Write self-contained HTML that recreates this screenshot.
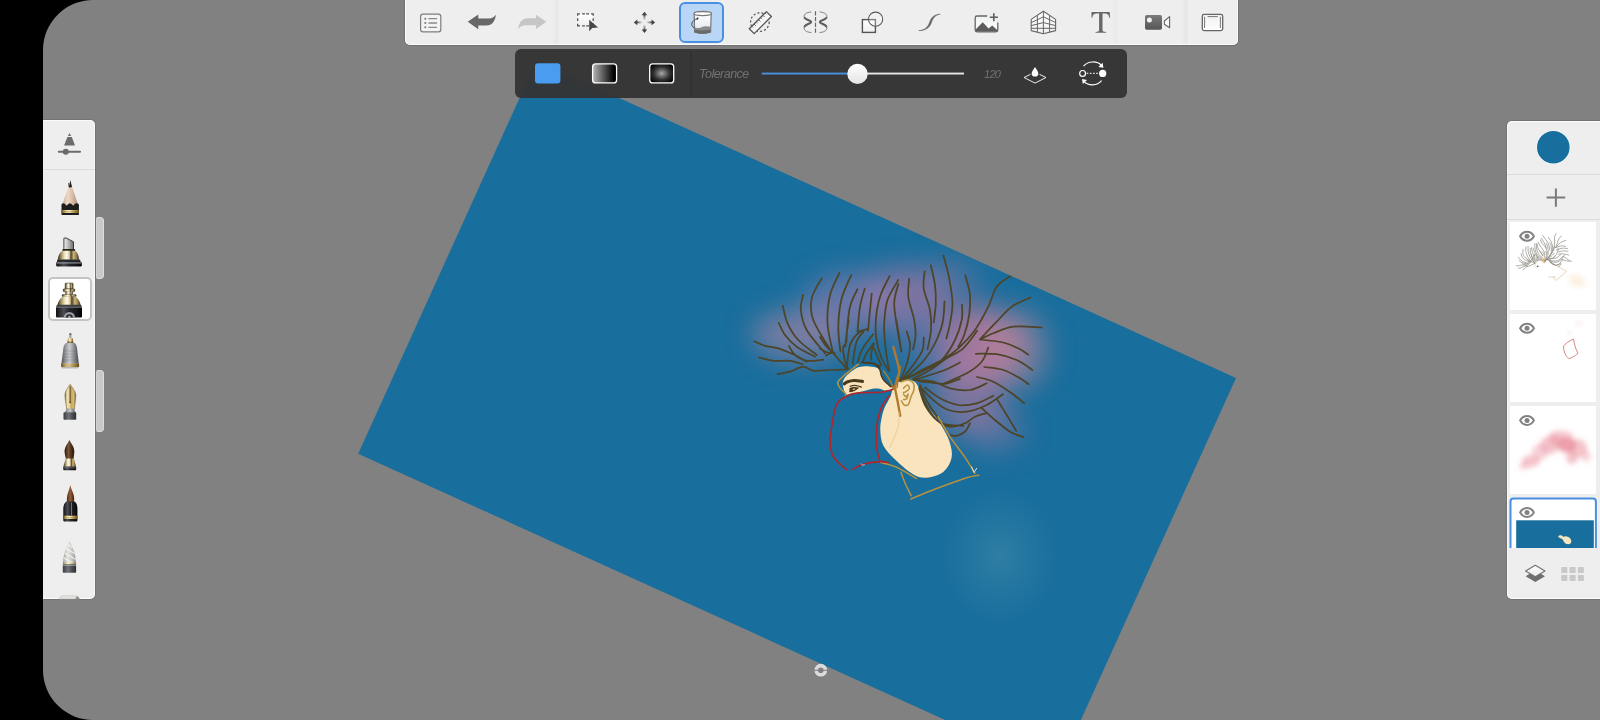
<!DOCTYPE html>
<html>
<head>
<meta charset="utf-8">
<title>Sketchbook</title>
<style>
html,body{margin:0;padding:0;}
body{width:1600px;height:720px;overflow:hidden;background:#000;position:relative;font-family:"Liberation Sans",sans-serif;}
#stage{position:absolute;left:43px;top:0;width:1557px;height:720px;background:#818181;border-radius:50px 0 0 50px;overflow:hidden;}
#art{position:absolute;left:0;top:0;width:1600px;height:720px;}
#topbar{position:absolute;left:404.7px;top:-2px;width:833.3px;height:47px;background:#eeeeee;border-radius:0 0 5px 5px;box-shadow:0 0 0 1px rgba(0,0,0,.12), inset 0 0 0 1px rgba(255,255,255,.75);}
#topbar .div{position:absolute;top:2px;height:44px;width:7px;background:linear-gradient(to right,rgba(0,0,0,0),rgba(0,0,0,.035) 85%,rgba(0,0,0,.07) 86%,rgba(255,255,255,.5) 100%);}
#topbar svg{position:absolute;left:.3px;top:2px;}
#selbtn{position:absolute;left:274.4px;top:4px;width:41px;height:37px;border:2px solid #4a90e2;border-radius:6px;background:#b9d6f7;}
#optbar{position:absolute;left:515px;top:48.5px;width:612px;height:49px;background:rgba(53,53,53,.97);border-radius:6px;}
#optbar svg{position:absolute;left:0;top:0;}
#optbar .lbl{will-change:transform;position:absolute;color:#727272;font-style:italic;font-size:12px;line-height:14px;}
#leftp{position:absolute;left:-2px;top:120px;width:54.2px;height:478.8px;background:#eeeeee;border-radius:0 5px 5px 0;overflow:hidden;box-shadow:0 0 0 1px rgba(0,0,0,.1), inset 0 0 0 1px rgba(255,255,255,.7);}
#leftp .hr{position:absolute;left:2px;top:49px;width:52px;height:1px;background:#dcdcdc;}
#lsel{position:absolute;left:47.5px;top:277.3px;width:40.4px;height:40.2px;border:2px solid #c4c4c4;border-radius:5px;background:#fff;}
.sh{position:absolute;left:95.8px;width:8.1px;background:#c9c9c9;border:1px solid #dcdcdc;border-left-color:#d0d0d0;box-sizing:border-box;border-radius:2px 4px 4px 2px;}
#rightp{position:absolute;left:1506.8px;top:120.8px;width:96px;height:478px;background:#eeeeee;border-radius:5px 0 0 5px;overflow:hidden;box-shadow:0 0 0 1px rgba(0,0,0,.1), inset 0 0 0 1px rgba(255,255,255,.7);}
#rightp .hr{position:absolute;left:0;width:93px;height:1px;background:#dcdcdc;}
.layer{position:absolute;left:3px;width:86.5px;height:88px;background:#fff;overflow:hidden;}
#brushes,#ricons{position:absolute;left:0;top:0;width:1600px;height:720px;pointer-events:none;}
</style>
</head>
<body>
<div id="stage"></div>

<!-- ARTWORK -->
<svg id="art" viewBox="0 0 1600 720">
<defs>
<clipPath id="cv"><polygon points="536.5,60.6 1236,377.9 1057.7,771 358.2,453.75"/></clipPath>
<radialGradient id="glow1"><stop offset="0" stop-color="#3a86a6" stop-opacity=".68"/><stop offset=".5" stop-color="#3a86a6" stop-opacity=".32"/><stop offset="1" stop-color="#3a86a6" stop-opacity="0"/></radialGradient>
<!--HAIRDEF--><filter id="blur12" x="-50%" y="-50%" width="200%" height="200%"><feGaussianBlur stdDeviation="14"/></filter>
<g id="hairpaths" fill="none" stroke-linecap="round" stroke-linejoin="round">
<path d="M754.2 341.2 C756.0 342.0 761.0 344.6 765.0 345.8 C769.0 347.0 773.3 346.8 778.3 348.3 C783.3 349.8 790.3 352.9 795.0 355.0 C799.7 357.1 802.0 360.0 806.7 360.8 C811.4 361.6 820.5 359.9 823.3 359.7 M778.7 322.8 C779.8 324.8 782.0 331.0 785.0 335.0 C788.0 339.0 791.7 343.1 796.7 346.7 C801.7 350.3 812.0 355.0 815.0 356.7 M782.8 305.8 C783.6 308.7 784.9 317.6 787.5 323.3 C790.1 329.0 793.4 334.7 798.3 340.0 C803.2 345.3 813.6 352.5 816.7 355.0 M803.0 295.0 C802.6 297.5 800.2 304.2 800.8 310.0 C801.4 315.8 802.7 322.8 806.7 330.0 C810.7 337.2 822.0 349.4 825.0 353.3 M821.7 278.3 C820.0 281.6 813.1 291.4 811.7 298.3 C810.3 305.2 810.1 311.2 813.3 320.0 C816.5 328.8 827.9 345.7 830.8 350.8 M839.5 272.8 C837.9 276.5 832.0 286.6 830.0 295.0 C828.0 303.4 827.1 314.0 827.5 323.3 C827.9 332.6 831.7 346.2 832.5 350.8 M851.3 275.0 C849.7 278.9 843.9 289.7 841.7 298.3 C839.5 306.9 838.5 317.8 838.3 326.7 C838.1 335.6 840.1 347.5 840.5 351.7 M857.5 289.2 C856.2 292.1 851.8 299.3 850.0 306.7 C848.2 314.1 847.5 326.6 846.7 333.3 C845.9 340.0 845.5 344.5 845.3 346.7 M864.7 288.7 C863.9 291.7 861.2 299.5 860.0 306.7 C858.8 313.9 857.9 327.5 857.5 331.7 M857.5 331.7 L867.5 329.2 M871.7 293.7 C871.4 296.4 870.6 303.8 870.0 310.0 C869.4 316.2 868.3 327.3 868.0 330.8 M867.5 328.8 C865.8 329.6 860.4 331.1 857.5 333.8 C854.6 336.5 851.8 339.4 850.0 345.0 C848.2 350.6 847.4 363.8 846.9 367.5 M863.8 331.3 C862.5 333.2 858.1 337.1 856.3 342.5 C854.5 347.9 853.4 360.2 852.8 363.8 M873.3 334.2 C871.5 336.6 865.1 344.1 862.5 348.8 C859.9 353.5 858.3 360.2 857.5 362.5 M873.8 343.1 C872.5 344.9 868.2 350.6 866.3 353.8 C864.4 357.0 863.1 361.1 862.5 362.5 M873.8 345.0 C873.4 346.2 871.7 350.0 871.3 352.5 C870.9 355.0 871.3 358.8 871.3 360.0 M874.4 348.8 C875.1 350.7 877.6 357.3 878.8 360.0 C879.9 362.7 880.9 364.2 881.3 365.0 M889.7 275.8 C888.1 279.3 882.3 289.3 880.0 296.7 C877.7 304.1 876.4 313.0 875.8 320.0 C875.2 327.0 875.4 332.6 876.3 338.8 C877.2 345.1 879.2 352.1 881.3 357.5 C883.4 362.9 887.5 369.0 888.8 371.3 M898.3 280.0 C896.5 283.3 889.9 292.8 887.5 300.0 C885.1 307.2 884.6 316.2 884.2 323.3 C883.8 330.4 884.5 336.2 885.0 342.5 C885.5 348.8 886.8 356.5 887.5 361.3 C888.2 366.1 889.1 369.6 889.4 371.3 M898.3 284.2 C897.6 287.4 894.3 295.7 894.2 303.3 C894.1 310.9 896.3 321.9 897.5 330.0 C898.7 338.1 900.7 348.1 901.3 351.7 M759.2 357.5 C761.6 358.1 768.2 360.2 773.3 360.8 C778.4 361.4 785.1 360.2 790.0 360.8 C794.9 361.4 800.4 363.6 802.5 364.2 M777.5 374.2 C779.6 373.8 785.7 372.9 790.0 371.7 C794.3 370.4 799.4 366.8 803.3 366.7 C807.2 366.6 808.8 370.2 813.3 370.8 C817.8 371.4 824.4 370.2 830.0 370.0 C835.6 369.8 844.1 369.5 846.9 369.4 M789.0 346.0 C790.0 347.5 792.0 352.4 795.0 355.0 C798.0 357.6 804.8 360.6 806.7 361.7 M820.0 336.9 C821.0 338.5 824.0 343.5 826.3 346.3 C828.6 349.1 831.3 351.1 833.8 353.8 C836.3 356.5 839.1 360.0 841.3 362.5 C843.5 365.0 846.0 367.8 846.9 368.8 M820.0 348.8 C821.2 349.4 825.0 351.8 827.5 352.5 C830.0 353.2 833.8 353.0 835.0 353.1 M826.0 355.5 L833.0 351.5 M848.8 320.0 C848.5 322.1 847.3 328.8 846.9 332.5 C846.5 336.2 846.9 340.0 846.3 342.5 C845.7 345.0 843.3 344.4 843.1 347.5 C842.9 350.6 844.2 357.8 845.0 361.3 C845.8 364.9 847.6 367.6 848.1 368.8 M863.8 362.5 C865.2 362.6 869.8 362.5 872.5 363.1 C875.2 363.7 878.8 365.8 880.0 366.3 M909.2 278.7 C909.1 281.7 907.5 289.8 908.3 296.7 C909.1 303.6 913.0 313.6 914.2 320.0 C915.4 326.4 915.8 330.1 915.6 335.0 C915.4 339.9 913.5 347.0 913.1 349.4 M924.7 271.3 C924.5 274.1 922.8 281.9 923.7 288.3 C924.6 294.8 928.8 303.1 930.0 310.0 C931.2 316.9 931.4 323.5 931.0 330.0 C930.6 336.5 928.1 346.0 927.5 349.2 M930.8 265.3 C931.5 268.6 934.2 278.7 935.0 285.0 C935.8 291.3 936.0 297.1 935.8 303.3 C935.6 309.6 934.1 319.3 933.7 322.5 M943.3 255.3 C944.3 259.1 947.7 270.3 949.2 278.3 C950.7 286.3 952.4 295.8 952.5 303.3 C952.6 310.8 951.0 317.4 950.0 323.3 C949.0 329.2 946.9 336.1 946.3 338.7 M944.5 301.7 C944.2 305.3 944.1 316.4 942.5 323.3 C940.9 330.2 938.0 337.2 935.0 343.3 C932.0 349.4 928.4 354.9 924.2 360.0 C920.0 365.1 913.8 370.4 910.0 374.0 C906.2 377.6 902.8 380.1 901.3 381.3 M965.3 275.3 C966.1 278.6 969.4 288.4 970.0 295.0 C970.6 301.6 970.2 308.3 969.2 315.0 C968.2 321.7 966.0 329.7 964.2 335.0 C962.4 340.3 959.3 344.8 958.3 346.7 M962.0 304.7 C962.0 307.2 962.9 314.1 961.7 320.0 C960.5 325.9 958.3 333.3 955.0 340.0 C951.7 346.7 947.5 354.6 941.7 360.0 C935.9 365.4 925.7 369.5 920.0 372.5 C914.3 375.5 909.6 377.1 907.5 378.0 M1010.8 275.8 C1008.4 277.6 1000.5 281.6 996.7 286.7 C993.0 291.8 991.9 299.5 988.3 306.7 C984.7 313.9 980.0 323.1 975.0 330.0 C970.0 336.9 963.6 343.4 958.3 348.3 C953.0 353.2 949.7 355.4 943.3 359.2 C936.9 363.0 926.4 367.5 920.0 371.0 C913.6 374.5 907.5 378.5 905.0 380.0 M1030.5 297.5 C1027.4 299.0 1017.3 302.7 1011.7 306.7 C1006.1 310.7 1002.0 316.3 996.7 321.7 C991.4 327.1 982.8 336.3 980.0 339.2 M1042.0 327.5 C1037.2 327.4 1021.4 325.7 1013.3 326.7 C1005.2 327.7 998.8 331.2 993.3 333.3 C987.8 335.4 982.2 338.5 980.0 339.5 M980.0 339.5 C983.9 340.0 996.9 341.0 1003.3 342.5 C1009.7 344.0 1014.1 346.3 1018.3 348.3 C1022.5 350.3 1026.6 353.6 1028.3 354.7 M977.2 330.8 C974.9 333.7 968.4 343.7 963.3 348.3 C958.2 352.9 952.2 354.7 946.7 358.3 C941.2 361.9 935.6 366.6 930.0 370.0 C924.4 373.4 915.9 377.3 913.1 378.8 M975.8 353.8 C979.3 353.9 989.9 353.2 996.7 354.2 C1003.5 355.2 1010.7 357.4 1016.7 360.0 C1022.7 362.6 1029.9 368.3 1032.5 370.0 M988.3 347.5 C987.2 349.9 985.3 357.4 981.7 361.7 C978.1 366.0 973.1 369.6 966.7 373.3 C960.3 377.0 947.2 382.0 943.3 383.7 M906.7 331.3 C907.2 333.6 909.9 340.0 910.0 345.0 C910.1 350.0 908.8 356.3 907.5 361.3 C906.2 366.3 903.8 371.7 902.5 375.0 C901.2 378.3 900.4 380.2 900.0 381.3 M923.8 337.5 C923.6 339.6 924.0 345.8 922.5 350.0 C921.0 354.2 917.7 358.5 915.0 362.5 C912.3 366.5 908.6 370.7 906.3 373.8 C904.0 376.9 902.1 380.1 901.3 381.3 M896.3 320.0 C896.7 322.5 898.0 329.8 898.8 335.0 C899.6 340.2 900.9 348.6 901.3 351.3 M984.2 367.0 C987.4 367.5 997.3 368.1 1003.3 370.0 C1009.3 371.9 1015.8 375.9 1020.0 378.3 C1024.2 380.7 1027.2 383.2 1028.7 384.2 M977.0 377.0 C979.7 377.8 987.5 379.0 993.3 381.7 C999.1 384.4 1006.6 389.7 1011.7 393.3 C1016.9 396.9 1022.1 401.6 1024.2 403.3 M986.7 383.3 C983.9 384.4 976.1 389.2 970.0 390.0 C963.9 390.8 956.1 389.7 950.0 388.3 C943.9 386.9 939.4 383.1 933.3 381.7 C927.2 380.3 916.6 380.3 913.3 380.0 M993.3 395.8 C990.5 397.1 982.5 401.8 976.7 403.3 C970.9 404.8 964.4 405.8 958.3 405.0 C952.2 404.2 945.5 401.2 940.0 398.3 C934.5 395.4 927.5 389.3 925.0 387.5 M1003.0 394.2 C1000.3 396.0 992.8 402.1 986.7 405.0 C980.7 407.9 973.1 410.9 966.7 411.7 C960.3 412.5 953.9 411.9 948.3 410.0 C942.7 408.1 938.0 403.9 933.3 400.0 C928.6 396.1 922.2 388.9 920.0 386.7 M997.5 400.0 C999.0 402.5 1003.6 409.9 1006.7 415.0 C1009.8 420.1 1014.6 428.2 1016.2 430.8 M981.7 408.0 C983.9 410.0 990.3 416.1 995.0 420.0 C999.7 423.9 1005.2 428.8 1010.0 431.7 C1014.8 434.6 1021.4 436.3 1023.7 437.2 M985.8 413.3 C984.0 413.9 978.5 415.0 975.0 416.7 C971.5 418.4 969.2 421.6 965.0 423.3 C960.8 425.0 954.7 427.2 950.0 426.7 C945.3 426.1 940.9 423.6 936.7 420.0 C932.5 416.4 927.9 410.3 925.0 405.0 C922.1 399.7 920.2 391.1 919.2 388.3 M970.0 423.3 C969.2 424.7 967.2 429.6 965.0 431.7 C962.8 433.8 959.2 435.2 956.7 435.8 C954.2 436.4 951.1 435.1 950.0 435.0 M921.7 395.0 C923.1 397.8 926.7 407.0 930.0 411.7 C933.3 416.4 936.2 420.9 941.7 423.3 C947.2 425.7 959.7 425.4 963.3 425.8 M960.0 362.5 C957.5 363.8 950.0 367.9 945.0 370.0 C940.0 372.1 935.2 373.3 930.0 375.0 C924.8 376.7 916.5 379.2 913.8 380.0 M960.0 378.8 C957.5 379.6 950.0 383.2 945.0 383.8 C940.0 384.4 934.4 382.9 930.0 382.5 C925.6 382.1 920.7 381.5 918.8 381.3 M920.0 385.0 C920.6 386.7 922.1 391.4 923.8 395.0 C925.5 398.6 927.6 402.5 930.0 406.3 C932.4 410.1 936.7 416.1 938.0 418.0"/>
</g><!--/HAIRDEF--></defs>
<polygon points="536.5,60.6 1236,377.9 1057.7,771 358.2,453.75" fill="#186e9d"/>
<g clip-path="url(#cv)" id="artg">
<ellipse cx="1000" cy="556" rx="58" ry="68" fill="url(#glow1)"/>
<!--ART--><g filter="url(#blur12)">
<ellipse cx="978" cy="345" rx="44" ry="40" fill="#cc7a9a" opacity=".78"/>
<ellipse cx="905" cy="298" rx="46" ry="32" fill="#b478a4" opacity=".62"/>
<ellipse cx="968" cy="398" rx="38" ry="36" fill="#bc7aa0" opacity=".55"/>
<ellipse cx="800" cy="335" rx="48" ry="25" fill="#b486a6" opacity=".62"/>
<ellipse cx="850" cy="303" rx="46" ry="30" fill="#a07eae" opacity=".55"/>
<ellipse cx="1020" cy="350" rx="28" ry="40" fill="#cc8a9c" opacity=".5"/>
<ellipse cx="935" cy="345" rx="40" ry="30" fill="#8078b0" opacity=".35"/>
<ellipse cx="995" cy="430" rx="30" ry="22" fill="#a87aa6" opacity=".4"/>
<ellipse cx="950" cy="280" rx="30" ry="20" fill="#b078a4" opacity=".35"/>
</g>
<path d="M892.7 389.2 C891.7 391.2 891.8 392.9 891.0 395.0 C890.2 397.1 888.8 399.5 887.7 401.7 C886.6 403.9 885.3 405.6 884.3 408.3 C883.3 411.0 882.3 414.3 881.6 418.0 C880.9 421.7 880.0 425.8 880.3 430.5 C880.6 435.2 880.8 440.9 883.6 446.1 C886.4 451.3 892.0 456.8 897.2 461.6 C902.4 466.5 909.5 472.6 914.7 475.2 C919.9 477.8 923.4 478.0 928.3 477.4 C933.1 476.8 939.9 474.7 943.8 471.4 C947.7 468.1 950.6 462.6 951.6 457.7 C952.6 452.8 951.3 447.4 949.7 442.2 C948.1 437.0 944.5 431.1 941.9 426.6 C939.3 422.1 936.8 418.4 934.1 415.0 C931.5 411.6 928.2 409.5 926.0 406.0 C923.8 402.5 922.5 397.6 921.0 394.0 C919.5 390.4 918.5 386.8 917.0 384.5 C915.5 382.2 914.3 381.2 912.0 380.5 C909.7 379.8 905.5 379.6 903.0 380.0 C900.5 380.4 898.7 381.5 897.0 383.0 C895.3 384.5 893.7 387.2 892.7 389.2Z" fill="#fae4bd"/>
<path d="M842.7 383.3 C842.7 381.5 843.1 380.6 843.9 379.2 C844.7 377.8 846.1 376.1 847.7 374.6 C849.3 373.1 851.6 371.2 853.5 370.0 C855.4 368.8 856.9 367.7 859.3 367.1 C861.7 366.5 864.9 366.2 867.7 366.3 C870.5 366.4 873.9 366.8 876.0 367.5 C878.1 368.2 879.2 369.4 880.2 370.8 C881.2 372.2 881.2 374.3 881.8 375.8 C882.3 377.3 882.5 378.6 883.5 380.0 C884.5 381.4 886.3 383.0 887.7 384.2 C889.1 385.4 891.0 386.3 891.8 387.1 C892.6 387.9 893.4 388.6 892.7 389.2 C892.0 389.8 889.1 390.2 887.7 390.4 C886.3 390.6 885.7 390.7 884.3 390.4 C882.9 390.1 881.2 389.1 879.3 388.8 C877.4 388.5 874.9 388.5 872.7 388.8 C870.5 389.1 868.2 389.8 866.0 390.4 C863.8 390.9 861.8 391.5 859.3 392.1 C856.8 392.7 853.1 393.4 851.0 393.8 C848.9 394.2 848.0 395.2 846.8 394.6 C845.6 394.0 844.6 391.9 843.9 390.0 C843.2 388.1 842.7 385.1 842.7 383.3Z" fill="#fae4bd"/>
<use href="#hairpaths" stroke="#4e4428" stroke-width="1.75"/>
<path d="M861.8 362.5 C863.6 362.6 869.8 362.3 872.7 363.3 C875.6 364.3 877.8 366.2 879.3 368.3 C880.8 370.4 880.6 373.7 881.4 375.8 C882.2 377.9 882.7 379.0 884.3 380.8 C885.9 382.6 889.9 385.7 891.0 386.7" fill="none" stroke="#4a3a1e" stroke-width="1.6" stroke-linecap="round"/>
<path d="M893.4 347.0 C893.8 348.5 895.1 353.3 895.8 356.0 C896.5 358.7 897.1 360.7 897.7 363.3 C898.3 365.9 899.4 368.9 899.3 371.7 C899.1 374.5 897.5 377.2 896.8 380.0 C896.1 382.8 895.1 384.7 895.2 388.3 C895.4 391.9 896.9 397.1 897.7 401.7 C898.5 406.3 899.8 413.4 900.2 415.8" fill="none" stroke="#b07a2a" stroke-width="2.4" stroke-linecap="round"/>
<path d="M883.5 370.8 C884.5 372.2 887.6 376.3 889.3 379.2 C891.0 382.1 892.8 386.8 893.5 388.3 M900.4 366.3 C900.1 368.0 899.1 372.8 898.6 376.3 C898.1 379.8 897.4 385.6 897.2 387.5" fill="none" stroke="#b07a2a" stroke-width="1.4" stroke-linecap="round"/>
<path d="M899.0 412.0 C898.9 414.2 899.3 420.7 898.5 425.0 C897.7 429.3 895.4 434.3 894.0 438.0 C892.6 441.7 890.7 445.5 890.0 447.0" fill="none" stroke="#e8c890" stroke-width="1" stroke-linecap="round" opacity=".9"/>
<path d="M858.5 364.2 C857.2 365.2 853.6 367.9 851.0 370.0 C848.4 372.1 844.9 374.6 842.7 376.7 C840.5 378.8 838.1 380.6 837.7 382.5 C837.3 384.4 838.9 386.4 840.2 388.3 C841.5 390.2 844.8 392.3 845.6 393.8 C846.4 395.3 844.9 396.9 844.8 397.5 M901.4 381.7 C902.6 381.4 906.5 379.7 908.5 380.0 C910.5 380.3 912.6 381.6 913.5 383.3 C914.4 385.0 914.3 387.8 913.9 390.0 C913.5 392.2 911.9 394.3 911.0 396.7 C910.1 399.1 909.6 402.8 908.5 404.2 C907.4 405.6 905.5 405.6 904.3 405.0 C903.1 404.4 901.9 401.5 901.4 400.8 M903.5 388.3 C904.1 387.8 906.3 385.0 907.3 385.0 C908.3 385.0 909.5 387.2 909.3 388.3 C909.1 389.4 907.0 391.0 906.0 391.7 C905.0 392.4 903.9 392.4 903.5 392.5 M903.5 394.2 C903.9 394.6 905.2 396.7 906.0 396.7 C906.8 396.7 908.0 393.8 908.1 394.2 C908.2 394.6 907.2 398.1 906.5 399.0 C905.8 399.9 904.2 399.4 903.8 399.5 M880.7 462.6 C883.5 463.4 891.2 464.8 897.2 467.5 C903.2 470.2 913.4 476.8 916.6 478.7 M901.0 472.3 C901.8 474.4 904.2 481.1 905.9 485.0 C907.6 488.9 910.3 493.8 911.2 495.6 M910.8 499.0 C915.0 497.3 926.9 492.3 936.0 488.8 C945.1 485.3 958.1 480.5 965.2 478.2 C972.3 475.9 976.5 475.7 978.8 475.2 M938.0 416.9 C940.0 420.1 945.2 429.6 949.7 436.4 C954.2 443.2 961.0 451.5 965.2 457.7 C969.4 463.9 973.3 470.7 974.9 473.3" fill="none" stroke="#b8923c" stroke-width="1.5" stroke-linecap="round" stroke-linejoin="round"/>
<path d="M971.5 466.5 L974 472.5 L976.8 468" fill="none" stroke="#e8e0d0" stroke-width="1"/>
<path d="M844.2 383.8 C844.8 383.4 846.0 382.2 847.7 381.7 C849.4 381.1 851.8 380.6 854.3 380.5 C856.8 380.4 861.0 381.2 862.4 381.4" fill="none" stroke="#4a3a1c" stroke-width="3.2" stroke-linecap="round"/>
<path d="M850.2 386.3 C850.9 386.1 852.8 385.4 854.3 385.4 C855.8 385.4 858.1 386.0 859.3 386.3 C860.5 386.6 861.0 387.0 861.4 387.1 M849.8 391.7 C850.5 391.5 852.9 391.0 854.3 390.4 C855.7 389.8 857.5 388.3 858.1 387.9" fill="none" stroke="#4a3a1c" stroke-width="1.2" stroke-linecap="round"/>
<path d="M849.3 388.6 C851 387 856 386.6 858.3 387.9 C857 389.6 853 391.4 849.6 391.9 Z" fill="#4a3a1c"/><ellipse cx="853.9" cy="389.2" rx="1.3" ry=".8" fill="#cdb99a" transform="rotate(-20 853.9 389.2)"/>
<path d="M843.5 397.9 C844.8 397.3 848.4 395.0 851.0 394.2 C853.6 393.4 856.5 393.2 859.3 392.9 C862.1 392.6 864.9 392.6 867.7 392.5 C870.5 392.4 873.2 392.6 876.0 392.5 C878.8 392.4 882.1 392.1 884.3 391.7 C886.5 391.3 887.8 390.8 889.3 390.4 C890.8 390.0 892.5 389.4 893.1 389.2 M843.5 397.9 C842.7 398.5 839.9 400.0 838.5 401.7 C837.1 403.4 836.1 405.4 835.2 408.3 C834.3 411.2 833.9 413.2 833.0 418.9 C832.1 424.5 829.9 435.7 830.1 442.2 C830.3 448.7 831.2 453.1 834.0 457.7 C836.8 462.3 844.5 467.8 846.6 469.8 M889.8 395.4 C889.2 396.2 887.3 398.1 886.0 400.0 C884.7 401.9 883.0 404.2 881.8 406.7 C880.6 409.2 879.7 411.7 878.9 415.0 C878.1 418.3 877.1 421.1 876.8 426.6 C876.4 432.1 876.2 442.2 876.8 448.0 C877.3 453.8 879.5 459.3 880.1 461.6 M852.5 469.4 C854.4 468.5 859.5 465.3 864.1 464.0 C868.7 462.7 876.1 461.8 880.1 461.6 C884.1 461.4 887.0 462.4 888.4 462.6" fill="none" stroke="#b3242c" stroke-width="1.6" stroke-linecap="round" stroke-linejoin="round"/>
<path d="M861 463.5l1.6 1.8 2.2-.6" fill="none" stroke="#d8d0c8" stroke-width=".9"/><!--/ART--></g>
<g><circle cx="820.8" cy="670.2" r="4.6" fill="none" stroke="#dcdcdc" stroke-width="3.6"/><rect x="813.6" y="669.7" width="14.4" height="1.1" fill="#818181"/></g>
</svg>

<!-- TOP TOOLBAR -->
<div id="topbar">
<div class="div" style="left:147.5px"></div>
<div class="div" style="left:706px;opacity:.5"></div>
<div class="div" style="left:776px"></div>
<div id="selbtn"></div>
<svg width="833" height="45" viewBox="405 0 833 45">
<defs>
<linearGradient id="wg" x1="0" y1="0" x2="0" y2="1"><stop offset="0" stop-color="#ffffff"/><stop offset="1" stop-color="#f0f0f0"/></linearGradient>
<linearGradient id="wg2" x1="0" y1="0" x2="0" y2="1"><stop offset="0" stop-color="#f0f1f2"/><stop offset="1" stop-color="#fdfdfd"/></linearGradient>
<linearGradient id="bk" x1="0" y1="0" x2="0" y2="1"><stop offset="0" stop-color="#ffffff"/><stop offset="1" stop-color="#dfe3e8"/></linearGradient>
<linearGradient id="dk" x1="0" y1="0" x2="0" y2="1"><stop offset="0" stop-color="#7a7a7a"/><stop offset="1" stop-color="#555"/></linearGradient>
</defs>
<!-- list -->
<rect x="420.6" y="14.2" width="20.2" height="17.6" rx="2.4" fill="#f3f3f3" stroke="#7d7d7d" stroke-width="1.2"/>
<g stroke="#8a8a8a" stroke-width="1.3" stroke-linecap="round"><path d="M428.9 18.7H436.6M428.9 23H436.6M428.9 27.3H436.6"/></g>
<g fill="#777"><circle cx="425.3" cy="18.7" r="1"/><circle cx="425.3" cy="23" r="1"/><circle cx="425.3" cy="27.3" r="1"/></g>
<!-- undo -->
<path d="M467.7 21.8 L478.3 14.5 V18.6 H489 C492 18.6 494.2 17.2 495.9 14.8 C495.5 18.6 493.8 25.6 486 25.6 H478.3 V29.3 Z" fill="#676767"/>
<!-- redo -->
<path d="M546.4 21.8 L536 29.1 V25.2 H525.4 C522.4 25.2 520 26.6 518.1 29.1 C518.6 25.2 520.2 18.2 528 18.2 H536 V14.8 Z" fill="#c6c6c6"/>
<!-- select -->
<rect x="577.7" y="13.9" width="15.5" height="11.9" fill="url(#wg)"/><path d="M577.7 15.7V13.9H579.9M582.1 13.9H584.9M586.2 13.9H589M591.1 13.9H593.2V15.7M593.2 18.2V20.9M593.2 23.6V25.8M577.7 18.2V20.9M577.7 23.8V25.8H579.9M582.1 25.8H584.9M586.2 25.8H589" fill="none" stroke="#505050" stroke-width="1.25"/>
<path d="M589.2 19.7 L589.2 31.2 L592.3 28 L598.1 27.6 Z" fill="#484848"/>
<!-- move -->
<defs><linearGradient id="mvU" x1="0" y1="0" x2="0" y2="1"><stop offset="0" stop-color="#444"/><stop offset="1" stop-color="#444" stop-opacity=".05"/></linearGradient>
<linearGradient id="mvD" x1="0" y1="1" x2="0" y2="0"><stop offset="0" stop-color="#444"/><stop offset="1" stop-color="#444" stop-opacity=".05"/></linearGradient>
<linearGradient id="mvL" x1="0" y1="0" x2="1" y2="0"><stop offset="0" stop-color="#444"/><stop offset="1" stop-color="#444" stop-opacity=".05"/></linearGradient>
<linearGradient id="mvR" x1="1" y1="0" x2="0" y2="0"><stop offset="0" stop-color="#444"/><stop offset="1" stop-color="#444" stop-opacity=".05"/></linearGradient></defs>
<rect x="643.5" y="14.6" width="1.9" height="5.6" fill="url(#mvU)"/>
<rect x="643.5" y="24.6" width="1.9" height="5.6" fill="url(#mvD)"/>
<rect x="636.6" y="21.45" width="5.6" height="1.9" fill="url(#mvL)"/>
<rect x="646.6" y="21.45" width="5.6" height="1.9" fill="url(#mvR)"/>
<g fill="#444"><path d="M644.45 11.7l2.8 3.5h-5.6zM644.45 33.1l2.8-3.5h-5.6zM633.8 22.4l3.5-2.8v5.6zM655.1 22.4l-3.5-2.8v5.6z"/></g>
<!-- bucket -->
<path d="M694.2 14 L694.6 32 Q702.6 34.6 710.6 32 L711.2 14" fill="url(#bk)" stroke="#777" stroke-width="1.2"/>
<path d="M694.6 27.6 Q698 28.6 701 27.6 Q705 25.2 710.8 27 L710.6 32.2 Q702.6 34.8 694.6 32.2 Z" fill="#8a8a8a"/>
<path d="M694.6 29.8 Q702.6 31 710.7 29.8 L710.6 32.4 Q702.6 35 694.6 32.4 Z" fill="#6a6a6a"/>
<ellipse cx="702.7" cy="13.6" rx="8.8" ry="2.1" fill="#fff" stroke="#7a7a7a" stroke-width="1.3"/>
<path d="M697.3 18.6 C692 20.5 689.5 25 694.3 28" fill="none" stroke="#444" stroke-width="1"/>
<ellipse cx="697.6" cy="18.6" rx=".8" ry="1.3" fill="#333" transform="rotate(20 697.6 18.6)"/>
<!-- ruler -->
<circle cx="759.9" cy="22.1" r="9.3" fill="none" stroke="#555" stroke-width="1.2" stroke-dasharray="2 2.1"/>
<path d="M749.3 28.7 L766.4 11.6 L771.4 16.5 L754.2 33.6 Z" fill="#f6f6f6" stroke="#555" stroke-width="1.3" stroke-linejoin="round"/>
<g stroke="#555" stroke-width=".9"><path d="M751.8 26.2l1.3 1.3M754 24l1.8 1.8M756.2 21.8l1.3 1.3M758.4 19.6l1.8 1.8M760.6 17.4l1.3 1.3M762.8 15.2l1.8 1.8M765 13l1.3 1.3"/></g>
<!-- symmetry -->
<path d="M815.5 11.2V33.8" stroke="#666" stroke-width="1.2" stroke-dasharray="4.2 1.6" fill="none"/>
<g fill="none" stroke="#5e5e5e" stroke-linecap="round">
<path d="M811 12 C805.5 12.3 803.4 15 804.3 17.2 C805.4 19.8 811.4 20.2 811.4 21.9 C811.4 23.6 805.4 24.2 804.3 27 C803.4 29.4 805.5 32.2 811 32.5" stroke-width="1" opacity=".75"/>
<path d="M804.6 17.8 C806 20 811.2 20.4 811.2 21.9 C811.2 23.4 806 23.9 804.6 26.4" stroke-width="2.1"/>
<path d="M820 12 C825.5 12.3 827.6 15 826.7 17.2 C825.6 19.8 819.6 20.2 819.6 21.9 C819.6 23.6 825.6 24.2 826.7 27 C827.6 29.4 825.5 32.2 820 32.5" stroke-width="1" opacity=".75"/>
<path d="M826.4 17.8 C825 20 819.8 20.4 819.8 21.9 C819.8 23.4 825 23.9 826.4 26.4" stroke-width="2.1"/>
</g>
<!-- shapes -->
<rect x="862.4" y="19.6" width="13" height="12.8" fill="url(#wg)" stroke="#555" stroke-width="1.4"/>
<circle cx="875.6" cy="19.2" r="7.1" fill="rgba(255,255,255,.25)" stroke="#5a5a5a" stroke-width="1.1"/>
<!-- curve -->
<path d="M918.6 30.6 C926 30.3 928.4 25.6 929.6 22.3 C931 18 933.5 14.6 940.2 14.1 C934.6 15.4 932.8 18.8 931.4 22.8 C929.6 27.6 925.6 30.9 918.6 30.6 Z" fill="#666" stroke="#666" stroke-width=".5"/>
<!-- image+ -->
<path d="M987.2 16H977 Q975.2 16 975.2 17.8V30 Q975.2 31.8 977 31.8H996 Q997.8 31.8 997.8 30V22.5" fill="url(#wg2)" stroke="#666" stroke-width="1.3"/>
<path d="M975.6 29.6 L982.7 22.2 L988.6 28.4 L992.2 25.6 L997.5 30.2 L997.2 31 Q996.6 31.6 996 31.6 H977 Q975.8 31.4 975.6 30.6Z" fill="#5c5c5c"/>
<path d="M993.8 13.2V21.3M989.8 17.2H997.9" stroke="#5c5c5c" stroke-width="1.6" fill="none"/>
<!-- perspective grid -->
<path d="M1031.2 19.4 L1043.4 11.2 L1055.6 19.4 V30.6 L1043.4 33.7 L1031.2 30.6 Z" fill="url(#wg)" stroke="#666" stroke-width="1.1" stroke-linejoin="round"/>
<g fill="none" stroke="#666" stroke-width="1"><path d="M1043.4 11.2V33.7M1037.4 15.3V32.2M1049.6 15.3V32.2M1031.2 22.6L1043.4 16.8L1055.6 22.6M1031.2 25.6L1043.4 22.6L1055.6 25.6M1031.2 28.3H1055.6"/></g>
<!-- T -->
<path d="M1091.5 12.1 H1109.7 L1110.1 17.7 H1109.3 C1108.8 14.8 1107.6 13.5 1105 13.5 H1102.5 V29.6 C1102.5 31.4 1103.3 32 1106.1 32.1 V32.8 H1095.5 V32.1 C1098.3 32 1099.1 31.4 1099.1 29.6 V13.5 H1096.6 C1094 13.5 1092.8 14.8 1092.3 17.7 H1091.5 Z" fill="#686868"/>
<!-- video -->
<rect x="1145" y="15" width="17" height="14.8" rx="1.8" fill="url(#dk)"/>
<circle cx="1149.4" cy="19.9" r="2.5" fill="#f2f2f2"/>
<path d="M1164.4 21 L1169.6 16.6 V27.8 L1164.4 24.2 Z" fill="#f8f8f8" stroke="#666" stroke-width="1.1" stroke-linejoin="round"/>
<!-- fullscreen -->
<rect x="1202.3" y="14.4" width="20.4" height="16.2" rx="1.8" fill="url(#wg2)" stroke="#666" stroke-width="1.3"/>
<path d="M1204.6 17.2V27.6M1220.4 17.2V27.6M1208 16.6H1217.4" stroke="#777" stroke-width="1" fill="none" stroke-linecap="round"/>
</svg>
</div>

<!-- OPTIONS BAR -->
<div id="optbar">
<svg width="612" height="49" viewBox="515 48.5 612 49">
<defs>
<linearGradient id="lg1" x1="0" y1="0" x2="1" y2="0"><stop offset="0" stop-color="#b6b6b6"/><stop offset=".5" stop-color="#505050"/><stop offset=".9" stop-color="#000"/></linearGradient>
<radialGradient id="rg1" cx=".5" cy=".5" r=".6"><stop offset="0" stop-color="#a8a8a8"/><stop offset=".55" stop-color="#333"/><stop offset="1" stop-color="#000"/></radialGradient>
<linearGradient id="kn" x1="0" y1="0" x2="0" y2="1"><stop offset="0" stop-color="#ffffff"/><stop offset="1" stop-color="#e4e4e4"/></linearGradient>
</defs>
<rect x="535" y="62.8" width="25.4" height="20.2" rx="3" fill="#4a9cf0"/>
<rect x="592.6" y="63.4" width="24" height="19" rx="3" fill="url(#lg1)" stroke="#fff" stroke-width="1.3"/>
<rect x="649.7" y="63.4" width="24" height="19" rx="3" fill="url(#rg1)" stroke="#fff" stroke-width="1.3"/>
<rect x="690.5" y="51" width="1" height="44" fill="#2c2c2c"/>
<!-- slider -->
<rect x="761.8" y="72.1" width="96" height="1.9" fill="#4a90e2"/>
<rect x="857" y="72.1" width="107" height="1.9" fill="#e6e6e6"/>
<circle cx="857.5" cy="73.4" r="10.2" fill="url(#kn)"/>
<!-- drop -->
<path d="M1035 71.6 L1046 77 L1035 82.6 L1024 77 Z" fill="none" stroke="#eee" stroke-width="1" stroke-linejoin="round"/>
<path d="M1035 65.2 C1036.8 68.2 1039.1 70.4 1039.1 72.7 A4.1 4.1 0 0 1 1030.9 72.7 C1030.9 70.4 1033.2 68.2 1035 65.2 Z" fill="#fff" stroke="#353535" stroke-width="1.4"/>
<!-- swap -->
<circle cx="1082.6" cy="72.9" r="2.9" fill="none" stroke="#fff" stroke-width="1.2"/>
<circle cx="1102.7" cy="72.9" r="3.6" fill="#fff"/>
<path d="M1086.6 72.9H1098.6" stroke="#ddd" stroke-width="1.3" stroke-dasharray="1.7 1.5" fill="none"/>
<path d="M1083.6 65.6 C1088 60.4 1097 60 1101.4 65" fill="none" stroke="#fff" stroke-width="1.2"/>
<path d="M1103.4 67.2 L1098.4 66.4 L1102.6 62.2 Z" fill="#fff"/>
<path d="M1101.6 80.2 C1097 85.6 1088.4 85.6 1084 80.8" fill="none" stroke="#fff" stroke-width="1.2"/>
<path d="M1082 78.6 L1087 79.4 L1082.8 83.6 Z" fill="#fff"/>
</svg>
<div class="lbl" style="left:184.4px;top:18.4px;font-size:12.5px;letter-spacing:-0.52px;">Tolerance</div>
<div class="lbl" style="left:468.5px;top:18px;font-size:11px;letter-spacing:-0.7px;">120</div>
</div>

<!-- LEFT PANEL -->
<div style="position:absolute;left:43px;top:0;width:60px;height:720px;overflow:hidden;"><div id="leftp"><div class="hr"></div></div></div>
<div class="sh" style="top:216.8px;height:62px"></div>
<div class="sh" style="top:369.8px;height:62px"></div>
<div id="lsel"></div>
<svg id="brushes" viewBox="0 0 1600 720">
<defs>
<linearGradient id="gold" x1="0" y1="0" x2="1" y2="0">
<stop offset="0" stop-color="#2a2418"/><stop offset=".12" stop-color="#8a7a50"/><stop offset=".3" stop-color="#e8dcb0"/><stop offset=".42" stop-color="#fffdf0"/><stop offset=".55" stop-color="#d8c490"/><stop offset=".62" stop-color="#4a4030"/><stop offset=".75" stop-color="#cdb67a"/><stop offset=".9" stop-color="#8a7448"/><stop offset="1" stop-color="#2a2418"/></linearGradient>
<linearGradient id="goldb" x1="0" y1="0" x2="1" y2="0">
<stop offset="0" stop-color="#6a5424"/><stop offset=".25" stop-color="#e8d088"/><stop offset=".45" stop-color="#fff4c8"/><stop offset=".7" stop-color="#c8a850"/><stop offset="1" stop-color="#6a5424"/></linearGradient>
<linearGradient id="nibg" x1="0" y1="0" x2="1" y2="0"><stop offset="0" stop-color="#8a7034"/><stop offset=".2" stop-color="#f0e2b4"/><stop offset=".45" stop-color="#e6d298"/><stop offset=".55" stop-color="#c4a65c"/><stop offset=".8" stop-color="#d6bc78"/><stop offset="1" stop-color="#7a6230"/></linearGradient>
<linearGradient id="blk" x1="0" y1="0" x2="1" y2="0">
<stop offset="0" stop-color="#111"/><stop offset=".3" stop-color="#4a4e54"/><stop offset=".5" stop-color="#24262a"/><stop offset=".8" stop-color="#15161a"/><stop offset="1" stop-color="#000"/></linearGradient>
<linearGradient id="steel" x1="0" y1="0" x2="1" y2="0">
<stop offset="0" stop-color="#55575b"/><stop offset=".3" stop-color="#a6a8ac"/><stop offset=".48" stop-color="#c8cace"/><stop offset=".75" stop-color="#85878b"/><stop offset="1" stop-color="#47494d"/></linearGradient>
<linearGradient id="dgrey" x1="0" y1="0" x2="1" y2="0">
<stop offset="0" stop-color="#3a3c3e"/><stop offset=".4" stop-color="#70747a"/><stop offset=".7" stop-color="#4a4c50"/><stop offset="1" stop-color="#2c2e30"/></linearGradient>
<linearGradient id="wood" x1="0" y1="0" x2="1" y2="0">
<stop offset="0" stop-color="#c6a690"/><stop offset=".35" stop-color="#ecd8c8"/><stop offset=".6" stop-color="#dcc0aa"/><stop offset="1" stop-color="#a88672"/></linearGradient>
<linearGradient id="brown" x1="0" y1="0" x2="1" y2="0">
<stop offset="0" stop-color="#2a180a"/><stop offset=".4" stop-color="#7a563a"/><stop offset=".6" stop-color="#5a3a20"/><stop offset="1" stop-color="#241206"/></linearGradient>
<linearGradient id="brown2" x1="0" y1="0" x2="1" y2="0">
<stop offset="0" stop-color="#4a2612"/><stop offset=".45" stop-color="#96603a"/><stop offset="1" stop-color="#3e1e0c"/></linearGradient>
<linearGradient id="chis" x1="0" y1="0" x2="1" y2="0">
<stop offset="0" stop-color="#f4f4f4"/><stop offset=".5" stop-color="#b0b2b4"/><stop offset="1" stop-color="#6a6c6e"/></linearGradient>
<linearGradient id="wht" x1="0" y1="0" x2="1" y2="0">
<stop offset="0" stop-color="#a4a4a0"/><stop offset=".35" stop-color="#e4e4e0"/><stop offset=".7" stop-color="#c6c6c2"/><stop offset="1" stop-color="#8e8e8a"/></linearGradient>
</defs>
<!-- brush editor -->
<path d="M69.55 133 L71.2 136 H67.9 Z" fill="#6e6e6e"/>
<path d="M67.4 137 H71.8 L75 145.4 H64.1 Z" fill="#6b6b6b"/>
<path d="M58.8 151.7H80" stroke="#6b6b6b" stroke-width="2" stroke-linecap="round"/>
<circle cx="65.8" cy="151.7" r="3.05" fill="#6b6b6b"/>
<!-- pencil -->
<path d="M70.2 181.4 L78.7 206.6 H61.7 Z" fill="url(#wood)"/>
<path d="M70.3 180.3 L72 187 Q70.4 187.8 68.9 187.2 Z" fill="#1c1c1c"/>
<path d="M68.6 183 L69 187" stroke="#3a3a3a" stroke-width=".8"/>
<path d="M61.5 204.6 Q63.4 201.6 66.6 205.8 Q70 200.6 73.2 205.8 Q76.4 201.6 78.9 204.6 V214.4 Q78.9 215.1 78.2 215.1 H62.2 Q61.5 215.1 61.5 214.4 Z" fill="#1d1d1d"/>
<rect x="61.5" y="210" width="17.4" height="2.9" fill="url(#goldb)"/>
<rect x="61.5" y="211.3" width="17.4" height=".5" fill="#7a6430" opacity=".7"/>
<!-- chisel marker -->
<path d="M63.9 238.2 L66 237.9 L73.5 241.8 V249.6 H63.9 Z" fill="url(#chis)" stroke="#2e2e2e" stroke-width=".9" stroke-linejoin="round"/>
<rect x="62.4" y="249" width="12.8" height="2.2" rx=".8" fill="#2a261c"/>
<path d="M62.8 250.8 H74.8 C77.6 252 78.8 256 78.9 259.8 H57.9 C58 256 59.8 252 62.8 250.8 Z" fill="url(#gold)"/>
<rect x="57" y="259.4" width="23.4" height="2.8" rx="1" fill="#26282a"/>
<rect x="56.2" y="261.8" width="25.6" height="4.6" rx="1.2" fill="url(#blk)"/>
<rect x="56.6" y="262.5" width="24.8" height=".9" fill="#b4b8bc"/>
<!-- marker selected -->
<rect x="65.2" y="283.1" width="7.9" height="6" rx=".8" fill="url(#gold)" stroke="#2a2418" stroke-width=".5"/>
<rect x="63.2" y="288.8" width="11.6" height="3" rx="1.2" fill="url(#gold)" stroke="#2a2418" stroke-width=".5"/>
<rect x="65.4" y="291.6" width="7.4" height="3.2" fill="url(#gold)"/>
<rect x="62" y="294.4" width="14.2" height="2.4" rx="1" fill="url(#gold)" stroke="#2a2418" stroke-width=".4"/>
<path d="M62.6 296.6 H75.6 C78 298.6 80.2 302 80.6 305.2 H57.4 C57.8 302 60.2 298.6 62.6 296.6 Z" fill="url(#gold)"/>
<rect x="56.6" y="304.8" width="24.8" height="2.4" rx=".8" fill="#3c3e40"/>
<rect x="56" y="306.4" width="26" height="11" rx="1" fill="url(#blk)"/>
<rect x="56" y="306.4" width="26" height="1.6" fill="#6a6e72" opacity=".8"/>
<path d="M63.8 317.4 A5.6 5.4 0 0 1 75 317.4 Z" fill="#9a9ea2"/>
<path d="M66 317.4 A3.4 3.2 0 0 1 72.8 317.4 Z" fill="#2a2c2e"/>
<path d="M68 317.4 A1.4 1.4 0 0 1 70.8 317.4 Z" fill="#c8ccd0"/>
<!-- ballpoint -->
<rect x="69.2" y="333.4" width="2.3" height="5" rx=".9" fill="#a4a6a8"/>
<rect x="69.5" y="333.4" width="1.7" height="1.3" fill="#3c3c3c"/>
<path d="M68 338.2 H72.8 L73.3 343.3 H67.4 Z" fill="url(#goldb)"/>
<path d="M67.4 341.6 H73.3 V343.3 H67.4 Z" fill="#3a3020" opacity=".55"/>
<path d="M65.8 343 H74.9 C76.4 344.4 76.8 346.4 77 348 L78.8 363.8 H61.4 L63.4 348 C63.6 346.4 64.2 344.4 65.8 343 Z" fill="url(#steel)"/>
<g stroke="#4e5054" stroke-width=".5" opacity=".45"><path d="M63.2 351H77.4M62.9 354H77.7M62.5 357H78.1M62.1 360H78.5"/></g>
<rect x="61.1" y="363.5" width="18" height="3.5" rx=".6" fill="url(#goldb)"/>
<rect x="61.1" y="363.5" width="18" height="3.5" rx=".6" fill="#5a4420" opacity=".28"/>
<rect x="61.6" y="367" width="17" height="1.4" rx=".6" fill="#b8b8b4"/>
<!-- nib pen -->
<path d="M70.1 384.2 C72.4 388 76 391.6 75.8 395.6 C75.6 400.6 74.6 405.6 74.4 409.4 H66.6 C66.4 405.6 65.2 400.6 64.9 395.6 C64.7 391.6 67.8 388 70.1 384.2 Z" fill="url(#nibg)" stroke="#6a5424" stroke-width=".5"/>
<path d="M70.1 386.2V402" stroke="#3a2e14" stroke-width=".9"/>
<circle cx="70.1" cy="402.4" r=".8" fill="#3a2e14"/>
<path d="M67 408.4 H73.6 C74 410.4 75.4 411.6 76 412.6 H64.4 C65 411.6 66.6 410.4 67 408.4 Z" fill="url(#steel)"/>
<rect x="63.5" y="412.2" width="12.7" height="7.6" rx=".8" fill="url(#dgrey)"/>
<!-- round brush -->
<path d="M69.4 440 C71.6 444 74.6 447.6 74.3 452 C74.1 455 73.7 457 73.5 459.2 H66 C65.6 457 64.8 455 64.6 452 C64.4 447.6 67.2 444 69.4 440 Z" fill="url(#brown)"/>
<path d="M65.6 458.6 H74 C74.4 462 75.6 464 75.9 466.8 H63.5 C63.8 464 65.2 462 65.6 458.6 Z" fill="url(#gold)"/>
<rect x="63.3" y="466.5" width="12.8" height="3.7" rx=".8" fill="url(#blk)"/><rect x="63.6" y="467.6" width="12.2" height=".6" fill="#a8acb0" opacity=".8"/>
<!-- pointed brush -->
<path d="M70.3 485 C71.2 490 74.4 494 74.2 499 C74.1 500.6 73.8 502 73.6 503.4 H67 C66.8 502 66.9 500.6 66.9 499 C66.9 494 69.4 490 70.3 485 Z" fill="url(#brown2)"/>
<path d="M66.4 501.4 H74.6 C76.6 502.6 77.3 505.4 77.4 508.3 V520.6 Q77.4 521.4 76.6 521.4 H64.1 Q63.3 521.4 63.3 520.6 V508.3 C63.4 505.4 64.4 502.6 66.4 501.4 Z" fill="url(#blk)"/>
<rect x="71" y="502.4" width=".9" height="13" fill="#c8ccd4" opacity=".55"/>
<rect x="63.3" y="515.7" width="14.1" height="3.2" fill="url(#goldb)"/>
<rect x="63.3" y="517" width="14.1" height=".5" fill="#6a5424" opacity=".6"/>
<!-- smudge -->
<clipPath id="smc"><path d="M69.5 540.9 C72 545.6 75.8 553.6 75.9 562.9 H63 C63.1 553.6 67 545.6 69.5 540.9 Z"/></clipPath>
<path d="M69.5 540.9 C72 545.6 75.8 553.6 75.9 562.9 H63 C63.1 553.6 67 545.6 69.5 540.9 Z" fill="url(#wht)"/>
<g clip-path="url(#smc)" stroke="#f6f6f2" stroke-width="1.3" opacity=".8" fill="none"><path d="M66 543.4L74.6 548.6M64.4 547.6L76.4 554.6M62.8 552L77.4 560.4M62 556.8L76 565"/></g>
<rect x="62.9" y="562.6" width="13.2" height="1.9" fill="url(#goldb)" opacity=".75"/>
<rect x="62.8" y="564.3" width="13.3" height="8.4" rx=".8" fill="url(#dgrey)"/>
<rect x="63" y="565" width="12.9" height=".8" fill="#b4b8bc" opacity=".8"/>
<!-- partial bottom -->
<path d="M59.2 599 Q59.8 596 62.8 595.8 H76 Q78.8 596 79.4 599 Z" fill="#e4e4de" stroke="#b8b8b2" stroke-width=".5"/><path d="M75.6 599 Q75.8 596.4 77.4 596.2 Q79 596.6 79.4 599 Z" fill="#8c9094"/>
</svg>

<!-- RIGHT PANEL -->
<div id="rightp">
<div class="hr" style="top:53.6px"></div>
<div class="hr" style="top:98.4px"></div>
<div class="layer" style="top:101px"></div>
<div class="layer" style="top:193px"></div>
<div class="layer" style="top:285px"></div>
</div>

<svg id="ricons" viewBox="0 0 1600 720">
<defs>
<filter id="b3" x="-50%" y="-50%" width="200%" height="200%"><feGaussianBlur stdDeviation="2.6"/></filter>
<filter id="b5" x="-50%" y="-50%" width="200%" height="200%"><feGaussianBlur stdDeviation="5"/></filter>
<clipPath id="l4clip"><rect x="1507" y="497" width="93" height="51"/></clipPath>
<linearGradient id="wg3" x1="0" y1="0" x2="0" y2="1"><stop offset="0" stop-color="#ffffff"/><stop offset="1" stop-color="#e8e8e8"/></linearGradient>
</defs>
<!-- color -->
<circle cx="1553.3" cy="147.3" r="16.9" fill="#f8fcff"/>
<circle cx="1553.3" cy="147.3" r="16.3" fill="#186e9d"/>
<!-- plus -->
<path d="M1546.6 197.6H1565.2M1555.9 188.6V206.8" stroke="#7a7a7a" stroke-width="2" fill="none"/>
<!-- layer1 thumb -->
<g transform="translate(1516.3 265.8) scale(.193) rotate(-24.5) translate(-754.2 -341.2)">
<use href="#hairpaths" stroke="#86847a" stroke-width="3.1"/>
<path d="M890.6 345 C895 356 897 370 895 385 M883.8 370 L893.8 387.5 M900 366 L896.3 387.5" stroke="#c89a50" stroke-width="4" fill="none"/>
<ellipse cx="853.6" cy="389.6" rx="5" ry="4" fill="#6a5a3c"/>
<path d="M858.8 365 L838 382 L845 397" stroke="#d8b884" stroke-width="2" fill="none"/>
<path d="M880.7 462.6 L916.6 478.7 M901 472 L911 495.6 L978.8 475.2 L938 417" stroke="#d0b080" stroke-width="2.4" fill="none"/>
</g>
<ellipse cx="1577" cy="281" rx="9" ry="6" fill="#fbeeda" opacity=".8" filter="url(#b3)" transform="rotate(25 1577 281)"/>
<!-- layer2 thumb -->
<path d="M1573.6 339 C1569 341 1565.4 343.6 1563.6 346 C1563.4 351 1565.2 356 1568.8 358.6 C1572 358 1575.4 355.6 1578 353.2 C1575.6 349 1574.2 344 1573.6 339 Z" fill="none" stroke="#d07878" stroke-width=".9" stroke-linejoin="round"/>
<circle cx="1579" cy="323.5" r="2.4" fill="#f6e4e8" filter="url(#b3)" opacity=".9"/>
<circle cx="1569.5" cy="333" r="2" fill="#f6e4e8" filter="url(#b3)" opacity=".9"/>
<!-- layer3 thumb -->
<g filter="url(#b3)" fill="#ea8c9a">
<ellipse cx="1566.8" cy="444.9" rx="9" ry="8" opacity=".8"/>
<ellipse cx="1561" cy="436" rx="12" ry="6" opacity=".4"/>
<ellipse cx="1550" cy="445" rx="10" ry="9" opacity=".5"/>
<ellipse cx="1540" cy="452" rx="8" ry="8" opacity=".4"/>
<ellipse cx="1531" cy="461" rx="9" ry="6" opacity=".5"/>
<ellipse cx="1524" cy="466" rx="5" ry="4" opacity=".35"/>
<ellipse cx="1578" cy="448" rx="9" ry="9" opacity=".5"/>
<ellipse cx="1572" cy="458" rx="6" ry="6" opacity=".5"/>
<ellipse cx="1586" cy="456" rx="5" ry="6" opacity=".35"/>
<ellipse cx="1556" cy="440" rx="8" ry="7" opacity=".35"/>
</g>
<!-- layer4 selected -->
<g clip-path="url(#l4clip)">
<rect x="1510.5" y="498.5" width="85.4" height="88" rx="3" fill="#fff" stroke="#4a8fdf" stroke-width="2"/>
<rect x="1516.2" y="520.3" width="77.6" height="43.8" fill="#186e9d"/>
<path d="M1558 536.4 C1559.5 534.6 1562 535 1563.4 536.8 C1565.6 535.6 1569 536.6 1570.6 539 C1572.2 541.6 1571 544 1568.4 544.2 C1565.6 544.2 1563.6 542 1562.8 539.4 C1561.6 538 1559 538.4 1558 536.4 Z" fill="#f6e6c0"/>
</g>
<path d="M1520.1 236.3 C1523.2 230.3 1530.8 230.3 1533.9 236.3 C1530.8 242.3 1523.2 242.3 1520.1 236.3 Z" fill="#fff" stroke="#828282" stroke-width="2" stroke-linejoin="miter"/><circle cx="1527.0" cy="236.3" r="2.5" fill="#828282"/>
<path d="M1520.1 328.3 C1523.2 322.3 1530.8 322.3 1533.9 328.3 C1530.8 334.3 1523.2 334.3 1520.1 328.3 Z" fill="#fff" stroke="#828282" stroke-width="2" stroke-linejoin="miter"/><circle cx="1527.0" cy="328.3" r="2.5" fill="#828282"/>
<path d="M1520.1 420.4 C1523.2 414.4 1530.8 414.4 1533.9 420.4 C1530.8 426.4 1523.2 426.4 1520.1 420.4 Z" fill="#fff" stroke="#828282" stroke-width="2" stroke-linejoin="miter"/><circle cx="1527.0" cy="420.4" r="2.5" fill="#828282"/>
<path d="M1520.1 512.4 C1523.2 506.4 1530.8 506.4 1533.9 512.4 C1530.8 518.4 1523.2 518.4 1520.1 512.4 Z" fill="#fff" stroke="#828282" stroke-width="2" stroke-linejoin="miter"/><circle cx="1527.0" cy="512.4" r="2.5" fill="#828282"/>
<!-- bottom icons -->
<path d="M1535.3 570.6 L1545 576.3 L1535.3 582 L1525.6 576.3 Z" fill="#6e6e6e"/>
<path d="M1535.3 565.3 L1545 571 L1535.3 576.7 L1525.6 571 Z" fill="url(#wg3)" stroke="#707070" stroke-width="1.1" stroke-linejoin="round"/>
<g fill="#c9c9c9"><rect x="1561.3" y="567" width="6" height="6" rx=".6"/><rect x="1569.6" y="567" width="6" height="6" rx=".6"/><rect x="1577.9" y="567" width="6" height="6" rx=".6"/><rect x="1561.3" y="575" width="6" height="6" rx=".6"/><rect x="1569.6" y="575" width="6" height="6" rx=".6"/><rect x="1577.9" y="575" width="6" height="6" rx=".6"/></g>
</svg>

</body>
</html>
